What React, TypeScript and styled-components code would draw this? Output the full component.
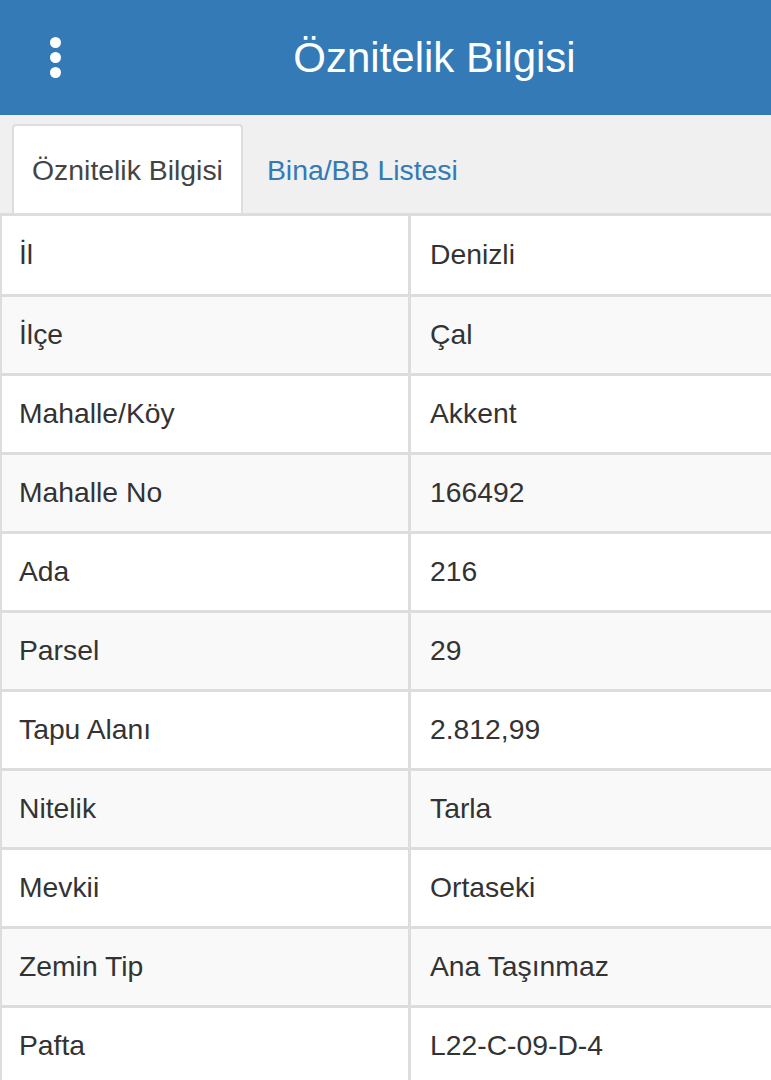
import React from 'react'
import styled, { createGlobalStyle } from 'styled-components'

const rows: [string, string][] = [
  ['İl', 'Denizli'],
  ['İlçe', 'Çal'],
  ['Mahalle/Köy', 'Akkent'],
  ['Mahalle No', '166492'],
  ['Ada', '216'],
  ['Parsel', '29'],
  ['Tapu Alanı', '2.812,99'],
  ['Nitelik', 'Tarla'],
  ['Mevkii', 'Ortaseki'],
  ['Zemin Tip', 'Ana Taşınmaz'],
  ['Pafta', 'L22-C-09-D-4'],
]

export default function App() {
  return (
    <StyledPage>
      <GlobalStyle />
      <Header>
        <MenuButton aria-label="menu">
          <Dot />
          <Dot />
          <Dot />
        </MenuButton>
        <Title>Öznitelik Bilgisi</Title>
      </Header>
      <TabBar>
        <Tab $active>Öznitelik Bilgisi</Tab>
        <Tab>Bina/BB Listesi</Tab>
      </TabBar>
      <InfoTable>
        <tbody>
          {rows.map(([label, value], i) => (
            <Row key={label} $striped={i % 2 === 1}>
              <LabelCell>{label}</LabelCell>
              <ValueCell>{value}</ValueCell>
            </Row>
          ))}
        </tbody>
      </InfoTable>
    </StyledPage>
  )
}

const GlobalStyle = createGlobalStyle`
  html, body {
    margin: 0;
    padding: 0;
    background: #fff;
  }
  body {
    font-family: 'Liberation Sans', Arial, Helvetica, sans-serif;
    color: #333;
  }
`

const StyledPage = styled.div`
  width: 771px;
  height: 1080px;
  overflow: hidden;
`

const Header = styled.header`
  display: flex;
  align-items: center;
  height: 115px;
  background: #337ab7;
`

const MenuButton = styled.div`
  display: flex;
  flex-direction: column;
  align-items: flex-start;
  gap: 4px;
  flex: 0 0 98px;
  box-sizing: border-box;
  padding-left: 50px;
`

const Dot = styled.span`
  width: 11px;
  height: 11px;
  border-radius: 50%;
  background: #fff;
`

const Title = styled.h1`
  flex: 1;
  margin: 0;
  text-align: center;
  color: #fff;
  font-size: 42px;
  font-weight: 400;
  line-height: 1;
`

const TabBar = styled.nav`
  display: flex;
  gap: 4px;
  padding: 9px 0 0 12px;
  background: #f0f0f0;
  border-bottom: 3px solid #ddd;
`

const Tab = styled.div<{ $active?: boolean }>`
  display: flex;
  align-items: center;
  height: 89px;
  padding: 2px 18px 0;
  box-sizing: border-box;
  font-size: 28.4px;
  color: ${p => (p.$active ? '#444' : '#337ab7')};
  background: ${p => (p.$active ? '#fff' : 'transparent')};
  border: 2px solid ${p => (p.$active ? '#ddd' : 'transparent')};
  border-bottom: none;
  border-radius: 4px 4px 0 0;
`

const InfoTable = styled.table`
  width: 100%;
  border-collapse: collapse;
  border-left: 2px solid #ddd;
  font-size: 28.3px;
  color: #333;
`

const Row = styled.tr<{ $striped: boolean }>`
  height: 79px;
  background: ${p => (p.$striped ? '#f9f9f9' : '#fff')};
  border-bottom: 3px solid #ddd;
`

const LabelCell = styled.td`
  width: 389px;
  padding: 0 0 0 17px;
  border-right: 3px solid #ddd;
  vertical-align: middle;
`

const ValueCell = styled.td`
  padding: 0 0 0 19px;
  vertical-align: middle;
`
